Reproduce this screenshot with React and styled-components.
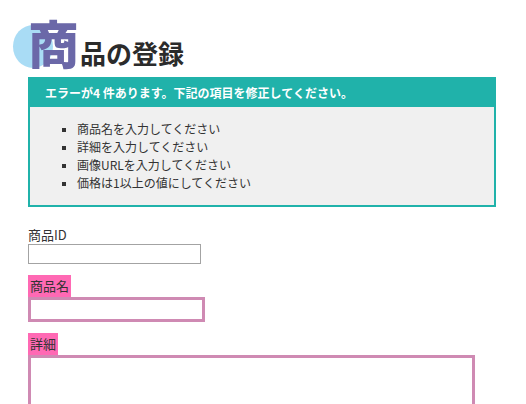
import React from "react";
import styled, { createGlobalStyle } from "styled-components";

const Global = createGlobalStyle`
  html, body { margin: 0; padding: 0; background: #fff; }
  body {
    font-family: "Noto Sans CJK JP", "Noto Sans", sans-serif;
    font-size: 13px;
    color: #333;
  }
  * { box-sizing: border-box; }
`;

const Page = styled.div`
  width: 526px;
  padding: 17px 28px 0;
`;

const Heading = styled.h1`
  display: flex;
  align-items: baseline;
  margin: 0 0 10px;
  height: 50px;
  line-height: 50px;
  font-weight: bold;
  color: #2b2b2b;
  font-size: 26px;
`;

const Initial = styled.span`
  position: relative;
  font-size: 51px;
  font-weight: 900;
  color: #6b68a8;
  margin-right: 1px;
  z-index: 0;
  &::before {
    content: "";
    position: absolute;
    left: -15px;
    top: 8px;
    width: 40px;
    height: 43px;
    border-radius: 50%;
    background: #a9dcf5;
    z-index: -1;
  }
`;

const ErrorBox = styled.div`
  width: 468px;
  border: 2px solid #20b2aa;
  padding: 7px 7px 0;
  margin-bottom: 19px;
  background: #f0f0f0;
`;

const ErrorTitle = styled.h2`
  margin: -7px -7px 0;
  padding: 5px 5px 5px 15px;
  font-size: 12px;
  line-height: 18px;
  font-weight: bold;
  color: #fff;
  background: #20b2aa;
`;

const ErrorList = styled.ul`
  margin: 13px 0 13px;
  padding-left: 40px;
  list-style: square;
  font-size: 12px;
  line-height: 18px;
  color: #333;
  li::marker { font-size: 10px; }
`;

const Field = styled.div`
  margin-bottom: 11px;
`;

const LabelWrap = styled.div`
  display: table;
  padding: ${(p) => (p.$error ? "2px" : "0")};
  background: ${(p) => (p.$error ? "#ff69b4" : "transparent")};
`;

const Label = styled.label`
  display: block;
  font-size: 13px;
  line-height: 18px;
  color: #333;
`;

const Input = styled.input`
  display: block;
  margin: 0;
  width: ${(p) => (p.$error ? "177px" : "173px")};
  height: ${(p) => (p.$error ? "25px" : "20px")};
  border: ${(p) => (p.$error ? "3px solid #cf8ab3" : "1px solid #a3a3a3")};
  background: #fff;
  padding: 1px 2px;
  font: inherit;
  outline: none;
`;

const TextArea = styled.textarea`
  display: block;
  margin: 0;
  width: 447px;
  height: 120px;
  border: 3px solid #cf8ab3;
  background: #fff;
  resize: none;
  font: inherit;
  outline: none;
`;

const errors = [
  "商品名を入力してください",
  "詳細を入力してください",
  "画像URLを入力してください",
  "価格は1以上の値にしてください",
];

export default function App() {
  return (
    <>
      <Global />
      <Page>
        <Heading>
          <Initial>商</Initial>
          品の登録
        </Heading>
        <ErrorBox>
          <ErrorTitle>エラーが4 件あります。下記の項目を修正してください。</ErrorTitle>
          <ErrorList>
            {errors.map((e) => (
              <li key={e}>{e}</li>
            ))}
          </ErrorList>
        </ErrorBox>
        <Field>
          <LabelWrap>
            <Label htmlFor="pid">商品ID</Label>
          </LabelWrap>
          <Input id="pid" type="text" />
        </Field>
        <Field>
          <LabelWrap $error>
            <Label htmlFor="pname">商品名</Label>
          </LabelWrap>
          <Input id="pname" type="text" $error />
        </Field>
        <Field>
          <LabelWrap $error>
            <Label htmlFor="pdesc">詳細</Label>
          </LabelWrap>
          <TextArea id="pdesc" />
        </Field>
      </Page>
    </>
  );
}
